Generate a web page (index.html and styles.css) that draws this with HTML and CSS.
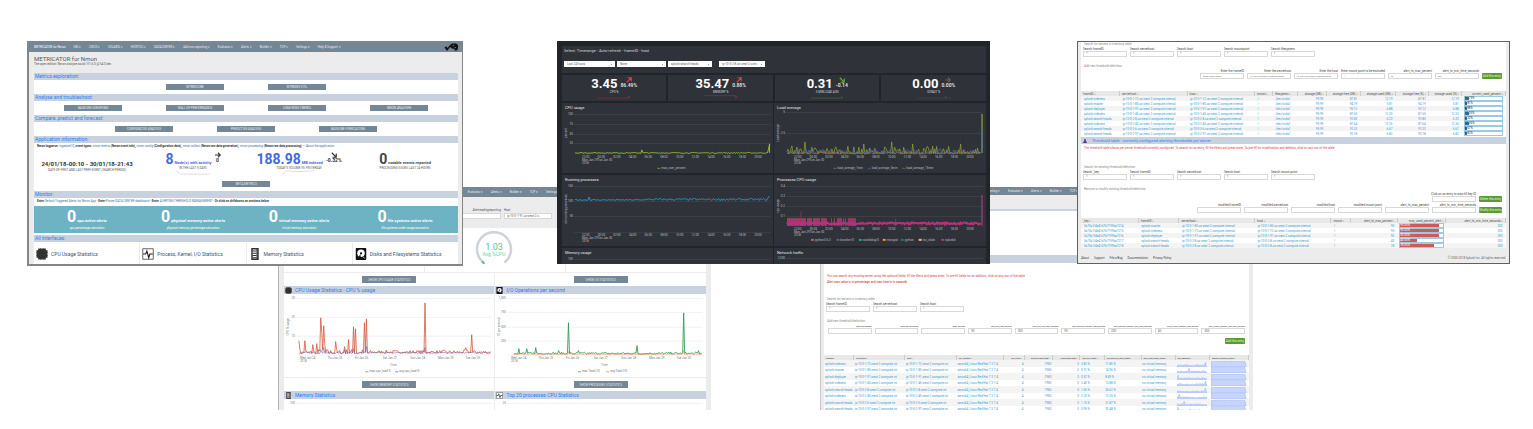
FILE: index.html
```html
<!DOCTYPE html>
<html lang="en">
<head>
<meta charset="utf-8">
<title>METRICATOR for Nmon</title>
<link rel="stylesheet" href="styles.css">
</head>
<body>
<main class="collage">

<section class="window back w-stats">
  <nav class="nav" data-nav></nav>
  <div class="filters">
    <label class="field">Alertreadingreporting<input class="box"></label>
    <label class="field">Host<select class="box"><option>ip-10-0-1-91.us-west-2.c...</option></select></label>
  </div>
  <div class="gauges">
    <svg class="gauge" viewBox="0 0 40 40">
      <path d="M9.5 31.5A17 17 0 1 1 30.500 31.5" fill="none" stroke="#cdd3d8" stroke-width="2.500"/>
      <path d="M8 30.500l2.500 2.200" stroke="#4fc878" stroke-width="2"/>
      <text x="20" y="19" class="g-num">1.03</text><text x="20" y="25" class="g-cap">Avg %CPU</text>
    </svg>
  </div>
  <div class="strip"><span></span><span></span><span></span></div>
  <div class="pair">
    <div class="act"><button class="btn">SHOW CPU USAGE STATISTICS</button></div>
    <div class="act"><button class="btn">SHOW I/O STATISTICS</button></div>
    <article><h2 class="bar"><svg class="ic" viewBox="0 0 16 16"><use href="#chip"/></svg>CPU Usage Statistics - CPU % usage</h2><div data-chart="cpu"></div></article>
    <article><h2 class="bar"><svg class="ic" viewBox="0 0 16 16"><use href="#disk"/></svg>I/O Operations per second</h2><div data-chart="io"></div></article>
    <div class="act"><button class="btn">SHOW MEMORY STATISTICS</button></div>
    <div class="act"><button class="btn">SHOW PROCESSES STATISTICS</button></div>
    <article><h2 class="bar"><svg class="ic" viewBox="0 0 16 16"><use href="#mem"/></svg>Memory Statistics</h2><div data-chart="mem"></div></article>
    <article><h2 class="bar"><svg class="ic" viewBox="0 0 16 16"><use href="#pulse"/></svg>Top 20 processes CPU Statistics</h2><div data-chart="top"></div></article>
  </div>
</section>

<section class="window back w-alerts">
  <nav class="nav small" data-nav></nav>
  <div class="gap-head"></div>
  <div class="sheet intro"></div>
  <h2 class="bar lone"></h2>
  <div class="sheet">
    <p class="warn">You can search any existing server using the optional fields, fill the filters and press enter. To pre-fill fields for an addition, click on any row of the table</p>
    <p class="warn strong">Alert max value is in percentage and max time is in seconds</p>
    <p class="hint top">Search for servers in inventory table</p>
    <div class="fields left"><label>Search frameID:<input class="box" value="*"></label><label>Search serverhost:<input class="box" value="*"></label><label>Search host:<input class="box" value="*"></label></div>
    <p class="hint mid">Add new threshold definition</p>
    <div class="fields nine">
      <label>Enter the frameID<input class="box"></label><label>Enter the serverhost<input class="box"></label><label>Enter the host<input class="box"></label>
      <label>alert_cpu_max_percent<input class="box" value="90"></label><label>alert_cpu_min_time_seconds<input class="box" value="300"></label><label>alert_physical_memory_max_percent<input class="box" value="90"></label>
      <label>alert_physical_memory_min_time_seconds<input class="box" value="300"></label><label>alert_virtual_memory_max_percent<input class="box" value="40"></label><label>alert_virtual_memory_min_time_seconds<input class="box" value="300"></label>
    </div>
    <div class="right"><button class="go">Add this entry</button></div>
    <table class="grid tall" data-table="servers"></table>
  </div>
</section>

<section class="window w-home">
  <nav class="nav" data-nav></nav>
  <header class="title"><h1>METRICATOR for Nmon</h1><p>The open edition: Nmon analyse could | V1.6.0 @ 54.0 dev</p></header>
  <div class="sheet home">
    <h2 class="bar">Metrics exploration:</h2>
    <div class="actions"><button class="btn">MTREDCUBE</button><button class="btn">MTREDEV UTIL</button></div>
    <h2 class="bar">Analyse and troubleshoot:</h2>
    <div class="actions"><button class="btn">BASELINE SURVEYING</button><button class="btn">WALL OF PERFORMANCE</button><button class="btn">LONG RUNS TRENDS</button><button class="btn">NMON ANALYSER</button></div>
    <h2 class="bar">Compare, predict and forecast:</h2>
    <div class="actions"><button class="btn">COMPARATIVE ANALYSIS</button><button class="btn">PREDICTIVE ANALYSIS</button><button class="btn">BASELINE FORECASTING</button></div>
    <h2 class="bar">Application information:</h2>
    <p class="links"><b>Nmon logparse:</b> <a href="#">ingested IQ</a>, <b>event types:</b> <a href="#">nmon events</a> <b>(Nmon event info),</b> <a href="#">nmon config</a> <b>(Configuration data),</b> <a href="#">nmon collect</a> <b>(Nmon raw data generation),</b> <a href="#">nmon processing</a> <b>(Nmon raw data processing)</b> — <a href="#">About the application</a></p>
    <div class="kpis">
      <div class="kpi"><strong class="range">24/01/18-00:10 - 30/01/18-21:43</strong><small>DATE OF FIRST AND LAST PERF EVENT (SEARCH PERIOD)</small></div>
      <div class="kpi blue"><div class="val"><strong>8</strong><b>Node(s) with activity</b><span class="trend"><svg class="arr" viewBox="0 0 8 8"><path d="M0 4h7M4 1l3 3-3 3"/></svg>0</span></div><small>IN THE LAST 5 DAYS</small><svg class="spark" viewBox="0 0 44 6"><path d="M2 1l5 4h35"/></svg></div>
      <div class="kpi blue"><div class="val"><strong>188.98</strong><b>MB indexed</b><span class="trend"><svg class="arr" viewBox="0 0 8 8"><path d="M1 1l6 6M7 2v5H2"/></svg>-0.32%</span></div><small>TODAY'S VOLUME VS YESTERDAY</small><svg class="spark" viewBox="0 0 44 6"><path d="M2 5l5-4 14 1 19-1"/></svg></div>
      <div class="kpi"><div class="val"><strong>0</strong><b>notable events reported</b></div><small>PROCESSING ISSUES LAST 24 HOURS</small></div>
    </div>
    <div class="center"><button class="btn meta">META METRICS</button></div>
    <h2 class="bar">Monitor:</h2>
    <p class="links"><b>Enter</b> <a href="#">Default Triggered Alerts for Nmon App</a> - <b>Enter</b> <a href="#">Power DATA CENTER dashboard</a> - <b>Enter</b> <a href="#">ALERTING THRESHOLD MANAGEMENT</a> - <b>Or click on drilldowns on sections below</b></p>
    <div class="alerts">
      <div><p><strong>0</strong><b>cpu active alerts</b></p><small>cpu percentage saturation</small></div>
      <div><p><strong>0</strong><b>physical memory active alerts</b></p><small>physical memory percentage saturation</small></div>
      <div><p><strong>0</strong><b>virtual memory active alerts</b></p><small>virtual memory saturation</small></div>
      <div><p><strong>0</strong><b>file systems active alerts</b></p><small>file systems under usage saturation</small></div>
    </div>
    <h2 class="bar">All interfaces:</h2>
    <div class="tiles">
      <a href="#"><svg viewBox="0 0 16 16"><g id="chip"><path d="M3 1h10v2h2v10h-2v2H3v-2H1V3h2z" fill="#333"/><path d="M0 4h16M0 6h16M0 8h16M0 10h16M0 12h16M4 0v16M6 0v16M8 0v16M10 0v16M12 0v16" stroke="#333" stroke-width=".8"/></g></svg>CPU Usage Statistics</a>
      <a href="#"><svg viewBox="0 0 16 16"><g id="pulse"><path d="M1 1h14v14H1z" fill="#fff" stroke="#333"/><path d="M1.500 8H5l1.500-4 2.500 9 1.500-5h4" fill="none" stroke="#222" stroke-width="1.500"/></g></svg>Process, Kernel, I/O Statistics</a>
      <a href="#"><svg viewBox="0 0 16 16"><g id="mem"><path d="M3 0h10v16H3z" fill="#333"/><path d="M5 2h5v12H5z" fill="#fff"/><path d="M5 4h5M5 7h5M5 10h5M5 13h5" stroke="#333" stroke-width="1.500"/><path d="M12 2v12" stroke="#999" stroke-dasharray="1 1"/></g></svg>Memory Statistics</a>
      <a href="#"><svg viewBox="0 0 16 16"><g id="disk"><rect x="1" width="14" height="16" rx="1" fill="#111"/><circle cx="8" cy="7" r="5" fill="#fff"/><circle cx="8" cy="7" r="1.500" fill="#111"/><path d="M7 8l-3 6h4z" fill="#111"/><path d="M11 12l2 2" stroke="#fff"/></g></svg>Disks and Filesystems Statistics</a>
    </div>
  </div>
</section>

<section class="window w-dark">
  <header class="dpanel dhead">
    <p>Select: Timerange - Auto-refresh - frameID - host</p>
    <div class="dctl">
      <select class="box" aria-label="Timerange"><option>Last 24 hours</option></select>
      <select class="box" aria-label="Auto-refresh"><option>None</option></select>
      <select class="box" aria-label="frameID"><option>splunk-search-heads</option></select>
      <select class="box" aria-label="host"><option>ip-10-0-2-8.us-west-2.com...</option></select>
    </div>
  </header>
  <div class="quad">
    <div class="dpanel num"><p><strong>3.45</strong><span class="trend red"><svg class="arr" viewBox="0 0 8 8"><path d="M1 7l6-6M2 1h5v5"/></svg>86.49%</span></p><small>CPU %</small><svg class="spark" viewBox="0 0 44 6"><path d="M2 5h38V2v3" stroke="#a33b3b"/></svg></div>
    <div class="dpanel num"><p><strong>35.47</strong><span class="trend red"><svg class="arr" viewBox="0 0 8 8"><path d="M1 7l6-6M2 1h5v5"/></svg>0.88%</span></p><small>MEMORY %</small><svg class="spark" viewBox="0 0 44 6"><path d="M2 2h38v3V2" stroke="#a33b3b"/></svg></div>
    <div class="dpanel num"><p><strong>0.31</strong><span class="trend green"><svg class="arr" viewBox="0 0 8 8"><path d="M1 1l6 6M7 2v5H2"/></svg>-0.14</span></p><small>5 MIN LOAD AVG</small><svg class="spark" viewBox="0 0 44 6"><path d="M2 5h38V3v2" stroke="#4d7a35"/></svg></div>
    <div class="dpanel num"><p><strong>0.00</strong><span class="trend dim"><svg class="arr" viewBox="0 0 8 8"><path d="M0 4h7M4 1l3 3-3 3"/></svg>0.00%</span></p><small>IOWAIT %</small><svg class="spark" viewBox="0 0 44 6"><path d="M2 5h34V2v3h6" stroke="#50545a"/></svg></div>
  </div>
  <div class="duo">
    <div class="dpanel" data-chart="dcpu"></div><div class="dpanel" data-chart="dload"></div>
    <div class="dpanel" data-chart="dproc"></div><div class="dpanel" data-chart="dpcpu"></div>
    <div class="dpanel" data-chart="dmem"></div><div class="dpanel" data-chart="dnet"></div>
  </div>
</section>

<section class="window w-fs">
  <div class="sheet">
    <p class="hint">Search for servers in inventory table</p>
    <div class="fields left"><label>Search frameID:<input class="box" value="*"></label><label>Search serverhost:<input class="box" value="*"></label><label>Search host:<input class="box" value="*"></label><label>Search mountpoint:<input class="box" value="*"></label><label>Search filesystem:<input class="box" value="*"></label></div>
    <p class="hint mid">Add new threshold definition</p>
    <div class="fields end">
      <label>Enter the frameID<input class="box" value="splunk-search-heads"></label><label>Enter the serverhost<input class="box" value="ip-10-0-2-8.us-west-2.compute.internal"></label><label>Enter the host<input class="box" value="ip-10-0-2-8.us-west-2.compute.internal"></label><label>Enter mount point to be excluded<input class="box" value="/"></label><label>alert_fs_max_percent<input class="box" value="90"></label><label>alert_fs_min_time_seconds<input class="box" value="300"></label><button class="go">Add this entry</button>
    </div>
    <table class="grid first" data-table="fs"></table>
    <h2 class="bar"><svg class="mark" viewBox="0 0 6 6"><path d="M2 0h2v2l2 4H0l2-4z" fill="#4b3a9c"/></svg>Threshold table - currently configured alerting thresholds per server</h2>
    <p class="warn">The threshold table shows per server threshold currently configured. To search for an entry, fill the filters and press enter. To pre-fill for modification and deletion, click on any row of the table</p>
    <p class="hint low">Search for existing threshold definition</p>
    <div class="fields left"><label>Search _key:<input class="box" value="*"></label><label>Search frameID:<input class="box" value="*"></label><label>Search serverhost:<input class="box" value="*"></label><label>Search host:<input class="box" value="*"></label><label>Search mount point:<input class="box" value="*"></label></div>
    <p class="hint mid">Remove or modify existing threshold definition</p>
    <div class="fields end tight"><label>Click on an entry to auto-fill key ID<input class="box"></label><button class="go wide">Delete this entry</button></div>
    <div class="fields end tight"><label>modified frameID<input class="box"></label><label>modified serverhost<input class="box"></label><label>modified host<input class="box"></label><label>modified mount point<input class="box"></label><label>alert_fs_max_percent<input class="box"></label><label>alert_fs_min_time_seconds<input class="box"></label><button class="go wide">Modify this entry</button></div>
    <table class="grid second" data-table="keys"></table>
  </div>
  <footer class="foot"><a href="#">About</a><a href="#">Support</a><a href="#">File a Bug</a><a href="#">Documentation</a><a href="#">Privacy Policy</a><span>© 2005-2018 Splunk Inc. All rights reserved.</span></footer>
</section>
</main>
<script src="app.js"></script>
</body>
</html>
```
FILE: styles.css
```css
* { box-sizing: border-box; }
body, h1, h2, p { margin: 0; }
body { background: #fff; font: 3px/4px Roboto, "Liberation Sans", sans-serif; color: #555; }
a { color: inherit; text-decoration: none; }
small { display: block; font-size: 3px; line-height: 4px; }
button, input, select { font: inherit; min-width: 0; margin: 0; border-radius: 0; }

.collage { position: relative; min-height: 429px; overflow: hidden; }
.window { position: absolute; top: 41px; width: 28.25%; height: 223px; overflow: hidden; background: #ececec; }
.back { top: 187px; }
.w-home { left: 1.76%; width: 28.45%; height: 225px; border: 1px solid #858585; border-width: 1px 1px 2px 2px; padding: 0 4px 0 5px; }
.w-stats { left: 18.13%; padding: 0 5px; border-left: 1px solid #b5b5b5; }
.w-dark { left: 36.33%; background: #212429; padding: 5px 4px 0 5px; color: #d5d7da; }
.w-alerts { left: 53.49%; padding: 0 4px 0 3px; border-left: 1px solid #c8c8c8; }
.w-fs { left: 70.25%; border: 1px solid #606060; padding: 0 3px; }

.nav { display: flex; gap: 8px; align-items: center; height: 10px; margin: 0 -5px; padding: 0 5px; background: #748796; color: #e4e9ec; white-space: nowrap; }
.nav a:first-child { color: #fff; }
.nav .logo { width: 14px; height: 8px; margin-left: auto; }
.nav.small { height: 8px; }

.title { height: 21px; padding-top: 3px; }
.title h1 { font-size: 6px; line-height: 7px; font-weight: 400; }
.sheet { background: #fff; }
.bar { display: flex; align-items: center; gap: 3px; height: 7px; padding-left: 1px; background: #c8d2de; color: #2c7df5; font-size: 5px; line-height: 7px; font-weight: 400; white-space: nowrap; }
.actions { display: flex; justify-content: center; gap: 44px; padding: 4px 0; }
.btn { width: 58px; height: 6px; padding: 0; border: 0; background: #748796; color: #e6ebef; line-height: 6px; text-align: center; white-space: nowrap; }
.actions .btn { flex: 0 1 58px; }
.links { height: 8px; padding-left: 3px; line-height: 7px; white-space: nowrap; color: #444; overflow: hidden; }
.links a { color: #3d70aa; }
.links b { color: #333; }
.kpis { display: grid; grid-template-columns: repeat(4, 1fr); height: 29px; padding-top: 1px; text-align: center; white-space: nowrap; }
.kpi strong { font-size: 14px; line-height: 14px; }
.kpi .range { display: block; font-size: 6px; line-height: 7px; padding-top: 8px; color: #333; }
.range + small { margin-top: 1px; }
.val { display: flex; justify-content: center; align-items: baseline; gap: 1px; color: #444; }
.val > b { font-size: 4px; }
.blue strong, .blue .val > b { color: #4169e1; }
.trend { display: flex; flex-direction: column; align-items: center; align-self: flex-start; font-size: 5px; line-height: 5px; font-weight: 700; color: #333; margin-left: 2px; }
.arr { width: 6px; height: 6px; fill: none; stroke: currentColor; stroke-width: 1.500; }
.spark { display: block; width: 44px; height: 5px; margin: 0 auto; fill: none; stroke: #bbb; stroke-width: .6; }
.center { display: flex; justify-content: center; height: 11px; padding-top: 1px; }
.meta { width: 48px; }
.alerts { display: grid; grid-template-columns: repeat(4, 1fr); height: 27px; margin-bottom: 2px; background: #6db3c4; color: #fff; text-align: center; padding-top: 2px; }
.alerts p { display: flex; align-items: baseline; justify-content: center; gap: 1px; }
.alerts strong { font-size: 16px; line-height: 18px; }
.alerts b { font-size: 4px; }
.tiles { display: grid; grid-template-columns: repeat(4, 1fr); gap: 1px; margin-top: 1px; background: #ececec; }
.tiles a { display: flex; align-items: center; gap: 3px; height: 22px; padding-left: 2px; background: #fff; color: #33557f; font-size: 5px; white-space: nowrap; }
.tiles svg { width: 12px; height: 12px; flex: none; }

.box { display: block; appearance: none; width: 44px; height: 6px; padding: 0 2px; border: 1px solid #d8d8d8; background: #fff; color: #666; line-height: 4px; }
.filters { display: flex; gap: 3px; height: 31px; padding: 11px 0 0 173px; color: #555; white-space: nowrap; }
.field { width: 44px; }
.field .box { width: 100%; margin-top: 1px; }
.field:first-child { text-align: right; }
.field:last-child { width: 48px; }
.gauges { height: 36px; background: #fff; padding: 3px 0 0 190px; }
.gauge { display: block; width: 40px; height: 40px; }
.g-num { font-size: 9px; text-anchor: middle; fill: #55c785; }
.g-cap { font-size: 5px; text-anchor: middle; fill: #6fd095; }
.strip { display: grid; grid-template-columns: repeat(3, 1fr); gap: 1px; height: 8px; margin-bottom: 1px; }
.strip span { background: #fff; }
.pair { display: grid; grid-template-columns: 1fr 1fr; gap: 0 1px; }
.act { display: flex; justify-content: center; align-items: center; height: 13px; background: #fff; }
.pair article { background: #fff; margin-bottom: 1px; }
.pair .bar { height: 8px; }
.pair .btn { width: 54px; height: 7px; }
.ic { width: 7px; height: 7px; }
.mark { width: 4px; height: 4px; margin: 0 2px 0 1px; }
.chart { display: block; width: 100%; height: auto; font-size: 3px; }

.gap-head { height: 14px; }
.intro { height: 46px; border-top: 2px solid #c8d2de; }
.lone { height: 8px; }
.warn { padding-left: 3px; line-height: 5px; color: #cf4a4a; white-space: nowrap; }
.w-fs .warn { padding-top: 2px; }
.w-fs .bar { font-size: 4px; }
.w-alerts .warn { line-height: 6px; }
.w-alerts .warn:first-child { padding-top: 10px; }
.strong { font-weight: 500; }
.hint { padding-left: 3px; color: #888; line-height: 4px; }
.hint.top { padding-top: 12px; }
.hint.mid { padding-top: 7px; }
.hint.low { padding-top: 14px; }
.fields { display: flex; gap: 3px; padding: 1px 2px 0; white-space: nowrap; color: #444; }
.fields label { flex: 0 1 44px; min-width: 0; }
.fields .box { width: 100%; }
.nine { padding: 1px 4px 0; color: #222; }
.nine label { flex: 1 1 0; font-size: 2px; }
.nine .box { font-size: 3px; }
.end label, .nine label { display: flex; flex-direction: column; align-items: flex-end; }
.end { justify-content: flex-end; align-items: flex-end; padding-right: 4px; }
.end .box { font-size: 2px; }
.go { width: 20px; height: 6px; padding: 0; border: 0; border-radius: 1px; background: #5a9a32; color: #e8f5df; line-height: 5px; text-align: center; white-space: nowrap; }
.go.wide { width: 23px; }
.right { display: flex; justify-content: flex-end; padding: 4px 4px 11px; }

.grid { width: 100%; table-layout: fixed; border-collapse: collapse; line-height: 4px; color: #3ba0d0; }
.grid th, .grid td { height: 5px; padding: 0 3px; text-align: left; white-space: nowrap; overflow: hidden; }
.grid th { padding: 0 2px; background: #e8e8e8; border-right: 1px solid #ccc; color: #555; font-weight: 400; }
.grid tr:nth-child(odd) td { background: #f4f4f4; }
.grid .r { text-align: right; }
.tall th { font-size: 2px; color: #222; }
.tall td { height: 7px; padding: 0 1px; }
.tall tr:nth-child(even) td { height: 6px; }
.first { margin: 12px 0 1px; }
.second { margin-top: 5px; }
.meter { display: block; width: 100%; height: 5px; border: 1px solid #9acbe2; background: #fff; color: #333; line-height: 3px; }
.meter i { display: block; height: 3px; background: #3a6ea5; font-style: normal; }
.meter.redbar { color: #fff; }
.redbar i { background: #cc5b5b; }
.grid .cell { padding: 0 2px; }
.grid svg { display: block; width: 100%; height: 6px; }
.foot { display: flex; gap: 5px; padding-top: 8px; color: #444; }
.foot span { margin-left: auto; color: #666; }

.dpanel { background: #2f3238; min-width: 0; }
.dhead { height: 27px; padding: 3px 2px; font-size: 4px; }
.dctl { display: grid; grid-template-columns: 51px 49px 49px 46px; column-gap: 2px; margin-top: 8px; font-size: 3px; }
.dctl .box { width: 100%; border-color: #fff; background-image: linear-gradient(90deg, transparent 50%, #999 50%); background-size: 2px 1px; background-position: right 2px center; background-repeat: no-repeat; }
.dctl .box:nth-child(3) { width: 44px; }
.quad { display: grid; grid-template-columns: repeat(4, 1fr); gap: 2px; margin: 2px 0; }
.num { height: 26px; padding-top: 2px; text-align: center; }
.num p { display: flex; justify-content: center; align-items: baseline; gap: 1px; }
.num strong { font-size: 13px; line-height: 13px; color: #fff; }
.num .trend { color: #ddd; }
.red .arr { color: #e04040; } .green .arr { color: #5fae32; } .dim .arr { color: #5c6066; }
.duo { display: grid; grid-template-columns: 1fr 1fr; gap: 2px 1px; }
```
FILE: app.js
```js
// Shared navigation
const navItems = ['UBI', 'LINUX', 'SOLARIS', 'HOWTOS', 'DATACENTER', 'Add-ons reporting', 'Evaluator', 'Alerts', 'Builder', 'TCP', 'Settings', 'Help & Support'];
document.querySelectorAll('[data-nav]').forEach(n => {
  n.innerHTML = '<a href="#">METRICATOR for Nmon</a>' + navItems.map(t => `<a href="#">${t} ▾</a>`).join('') +
    '<svg class="logo" viewBox="0 0 28 16"><path d="M1 8l4-1 2 3 5-6 4-3h8l4 3v7l-2 4h-6l2-3-6-1-4-3-5 7H5z" fill="#111"/><path d="M17 5h3M21 9h3" stroke="#748796" stroke-width="1.500"/></svg>';
});

// Deterministic noise so that the series look the same on each load
let seed = 7;
const rnd = () => (seed = (seed * 16807) % 2147483647) / 2147483647;

const text = (x, y, s, o = {}) => `<text x="${x}" y="${y}" fill="${o.c || '#888'}" text-anchor="${o.a || 'start'}" font-size="${o.s || 3}" ${o.r ? `transform="rotate(-90 ${x} ${y})"` : ''}>${s}</text>`;
const line = (pts, c, w = 0.7) => `<path d="M${pts.map(p => p.join(' ')).join('L')}" fill="none" stroke="${c}" stroke-width="${w}"/>`;

function noise(x0, x1, base, amp, power = 1) {
  const pts = [];
  for (let x = x0; x <= x1; x += 1) pts.push([x, +(base - Math.pow(rnd(), power) * amp).toFixed(2)]);
  return pts;
}
function spikes(pts, list) {
  list.forEach(([x, y]) => { const p = pts.find(q => q[0] >= x); if (p) p[1] = y; });
  return pts;
}
function frame(o) {
  const c = o.dark ? '#b9bcc2' : '#777', g = o.dark ? '#464a52' : '#e8e8e8';
  let s = o.title ? text(3, 6, o.title, { c: '#e2e4e7', s: 4 }) : '';
  o.grid.forEach(([y, l]) => { s += line([[12, y + 0.5], [209, y + 0.5]], g, 0.6) + text(11, y + 1.5, l, { a: 'end', c }); });
  if (o.axis) s += text(5, o.mid, o.axis, { a: 'middle', c, r: 1 });
  if (o.ticks) o.ticks.forEach((t, i) => {
    const x = o.tx + i * o.step;
    t.split('|').forEach((v, k) => { s += text(x, o.ty + k * 3, v, { c }); });
  });
  if (o.legend) {
    const total = o.legend.reduce((n, l) => n + l[0].length * 1.5 + 9, 0);
    let x = 112 - total / 2;
    o.legend.forEach(([l, col]) => {
      s += `<rect x="${x}" y="${o.box ? o.ly - 2 : o.ly - 1}" width="3" height="${o.box ? 2 : 0.8}" fill="${col}"/>` + text(x + 4, o.ly, l, { c });
      x += l.length * 1.5 + 9;
    });
  }
  return s;
}
const svg = (h, body) => `<svg class="chart" viewBox="0 0 212 ${h}">${body}</svg>`;
const hours = ['22:00|Mon Jan 29|2018', '00:00|Tue Jan 30', '02:00', '04:00', '06:00', '08:00', '10:00', '12:00', '14:00', '16:00', '18:00', '20:00'];
const days = ['Wed Jan 24|2018', 'Thu Jan 25', 'Fri Jan 26', 'Sat Jan 27', 'Sun Jan 28', 'Mon Jan 29', 'Tue Jan 30'];
const dk = { dark: 1, ticks: hours, tx: 20, step: 15.7 };
const lt = { ticks: days, tx: 16, step: 27.8, ty: 65 };

const charts = {
  dcpu: () => svg(70, frame({ ...dk, title: 'CPU usage', grid: [[11, 100], [21, 75], [31, 50], [40, 25]], axis: 'percent', mid: 30, ty: 55, legend: [['max_user_percent', '#8aa82c']], ly: 66 }) +
    line(spikes(noise(13, 206, 50.5, 1), [[80, 47]]).concat([[207, 46], [208, 41], [208, 50]]), '#9dc526', 0.9)),
  dload: () => svg(70, frame({ ...dk, title: 'Load average', grid: [[9, 5], [30, '2.5']], axis: 'Load average', mid: 30, ty: 55, legend: [['load_average_1min', '#6d8632'], ['load_average_5min', '#4a5a9c'], ['load_average_15min', '#9a6a2c']], ly: 66 }) +
    line(spikes(noise(13, 207, 51, 8, 3), [[31, 39], [90, 41], [118, 39], [139, 41], [187, 41], [18, 43], [62, 44]]), '#92ac2e') +
    line(noise(13, 207, 51, 5, 2), '#4a65b5') + line(noise(13, 207, 51, 2), '#a9763a') + line([[208.5, 50], [208.5, 11]], '#9dc526', 1) + line([[208.5, 50], [208.5, 26]], '#4a65b5', 1)),
  dproc: () => svg(71, frame({ ...dk, title: 'Running processes', grid: [[11, 150], [26, 100], [41, 50], [57, '']], axis: 'nbr running processes', mid: 34, ty: 61 }) +
    line(spikes(noise(13, 80, 25.5, 1), [[27, 22]]).concat(noise(81, 206, 25.5, 2)).concat([[207, 22], [208, 21]]), '#2592c4', 1)),
  dpcpu: () => svg(71, frame({ ...dk, title: 'Processes CPU usage', grid: [[11, '0.4'], [21, '0.3'], [31, '0.2'], [41, '0.1']], axis: 'cpu usage', mid: 31, ty: 55, box: 1, ly: 66, legend: [['python3.6.3', '#d4505f'], ['kworker/0', '#7e4b8f'], ['watchdog/0', '#1fa187'], ['mongod', '#f29b0c'], ['python', '#1f7a72'], ['tsc_clock', '#f6b27d'], ['splunkd', '#b3347d']] }) +
    line(noise(13, 207, 49.5, 2), '#b3347d', 2) +
    Array.from({ length: 69 }, (_, i) => rnd() > 0.2 ? line([[13.5 + i, 51], [13.5 + i, 44]], '#b3347d', 1) + line([[13.5 + i, 44], [13.5 + i, 43]], '#8b4a4f', 1) : '').join('') +
    line([[27, 44], [27, 36]], '#8f3a70') + line([[122, 48], [122, 44]], '#1f8a72') + line([[208.5, 51], [208.5, 20]], '#c63b8b', 1)),
  dmem: () => svg(71, frame({ dark: 1, title: 'Memory usage', grid: [[11, 100]] })),
  dnet: () => svg(71, frame({ dark: 1, title: 'Network traffic', grid: [[10, '2,000']] })),
  cpu: () => svg(84, frame({ ...lt, grid: [[4, 30], [23, 20], [42, 10], [61, '']], axis: 'CPU % usage', mid: 33, legend: [['max cpu_load %', '#d6563c'], ['avg cpu_load %', '#7068a8']], ly: 79 }) + text(110, 73, 'Time', { a: 'middle' }) +
    line(spikes(noise(15, 85, 60, 5, 3), [[15, 47], [21, 47], [29, 51], [33, 50], [37, 24], [38, 39], [40, 32], [41, 50], [52, 48], [61, 53], [65, 46], [70, 33], [72, 35], [81, 29], [83, 25]]).concat(spikes(noise(86, 208, 59.5, 3, 2), [[142, 9], [183, 54], [189, 41]])), '#d6563c', 0.8) +
    line(spikes(noise(15, 208, 60, 1.5), [[37, 56], [40, 54], [61, 56], [70, 55], [83, 53], [142, 54]]), '#6d65a8', 0.6)),
  io: () => svg(84, frame({ ...lt, grid: [[4, '1,000'], [18, 750], [33, 500], [47, 250], [61, '']], axis: 'IO per second', mid: 33, legend: [['max Total I/O', '#37a05a'], ['avg Total I/O', '#ef8a47']], ly: 79 }) + text(110, 73, 'Time', { a: 'middle' }) +
    line(spikes(noise(19, 208, 60.5, 2, 2), [[24, 55], [32, 55], [41, 54], [64, 57], [74, 29], [84, 57], [143, 52], [190, 19], [205, 57]]), '#2f9d55', 0.9) +
    line(spikes(noise(19, 208, 61, 0.8), [[74, 58], [190, 57]]), '#ef8a47', 0.6)),
  mem: () => svg(84, frame({ grid: [[4, 100]] })),
  top: () => svg(84, frame({ grid: [[4, 25]] }))
};
document.querySelectorAll('[data-chart]').forEach(el => { el.innerHTML = charts[el.dataset.chart](); });

// Tables
const frames = ['splunk-indexers', 'splunk-master', 'splunk-deployer', 'splunk-indexers', 'splunk-search-heads', 'splunk-indexers', 'splunk-search-heads', 'splunk-search-heads'];
const ips = ['ip-10-0-1-72', 'ip-10-0-1-85', 'ip-10-0-1-91', 'ip-10-0-1-45', 'ip-10-0-2-8', 'ip-10-0-2-45', 'ip-10-0-2-6', 'ip-10-0-2-97'];
const host = i => ips[i] + '.us-west-2.compute.internal';
const shortHost = i => ips[i] + '.west-2.compute.int';
const build = (name, widths, heads, rows, right) => {
  const el = document.querySelector(`[data-table="${name}"]`);
  const cls = i => right.includes(i) ? ' class="r"' : '';
  el.innerHTML = '<colgroup>' + widths.map(w => `<col style="width:${w}%">`).join('') + '</colgroup><thead><tr>' +
    heads.map((h, i) => `<th${cls(i)}>${h} ↕</th>`).join('') + '</tr></thead><tbody>' +
    rows.map(r => '<tr>' + r.map((c, i) => `<td${String(c).startsWith('<') ? ' class="cell"' : cls(i)}>${c}</td>`).join('') + '</tr>').join('') + '</tbody>';
};
const meter = (p, red) => `<span class="meter${red ? ' redbar' : ''}"><i style="width:${red || p}%">${p.toFixed(2)}%</i></span>`;

const used = [12.19, 5.81, 6.88, 12.35, 6.2, 12.36, 6.67, 6.82];
build('fs', [9.1, 15.9, 15.9, 4.2, 6, 6.7, 8, 8.3, 7.8, 7.8, 10.3],
  ['frameID', 'serverhost', 'host', 'mount', 'filesystem', 'storage (GB)', 'storage free (GB)', 'storage used (GB)', 'storage free (%)', 'storage used (%)', 'current_used_percent'],
  frames.map((f, i) => [f, host(i), host(i), '/', '/dev/xvda1', '99.99', (100 - used[i]).toFixed(2), used[i].toFixed(2), (100 - used[i]).toFixed(2), used[i].toFixed(2), meter(used[i])]),
  [5, 6, 7, 8, 9, 10]);
build('keys', [13.5, 9.6, 17.8, 18, 4.7, 10.9, 11.5, 14],
  ['_key', 'frameID', 'serverhost', 'host', 'mount', 'alert_fs_max_percent', 'max_used_percent_alert', 'alert_fs_min_time_seconds'],
  [[1, 90], [0, 90], [2, 90], [4, 40], [4, 78]].map(([k, p], n) => ['5a70a1f4e41d7b7199ba72' + (14 + n), frames[k], host(k), host(k), '/', p, meter(p, p), 300]), [5, 6, 7]);
const area = (flat, peak) => {
  const p = Array.from({ length: 30 }, (_, i) => `${i} ${flat ? 0.5 : i === peak ? 1 : (4.8 - rnd() * 1.2).toFixed(1)}`);
  return `<svg viewBox="0 0 30 6" preserveAspectRatio="none"><path d="M0 6L${p.join('L')}L30 6z" fill="#c5d5fb" stroke="#7f9de0" stroke-width=".3"/></svg>`;
};
const peaks = [28, 12, 1, 28, 28, 2, 7, 1];
build('servers', [7, 12, 12.2, 11, 5, 6.6, 6.5, 5.7, 8.7, 8, 8.1, 9.2],
  ['frameID', 'serverhost', 'host', 'OS_inventory', 'cpu_cores', 'physical mem (MB)', 'virtual mem (MB)', 'avg_cpu_usage', 'avg_physical_mem_usage', 'avg_virtual_mem_usage', 'cpu_sparkline', 'sparkline_physical_mem'],
  frames.map((f, i) => [f, shortHost(i), shortHost(i), 'amzn64, Linux Red Hat 7.3 7.4', 4, '7983', 0, ['3.82 %', '0.91 %', '0.52 %', '3.40 %', '1.06 %', '3.25 %', '1.15 %', '0.99 %'][i], ['11.86 %', '14.96 %', '8.49 %', '13.88 %', '36.62 %', '12.25 %', '31.87 %', '30.48 %'][i], 'no virtual memory', area(0, peaks[i]), area(1)]),
  [4, 5, 6]);
```
